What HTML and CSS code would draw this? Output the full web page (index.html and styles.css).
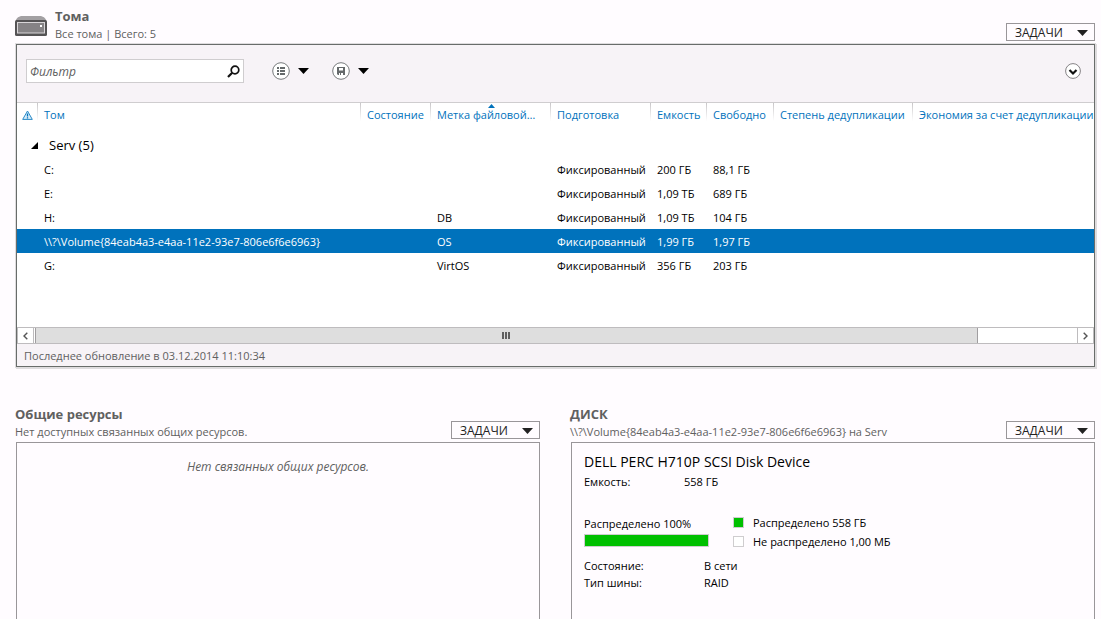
FILE: index.html
```html
<!DOCTYPE html>
<html lang="ru">
<head>
<meta charset="utf-8">
<title>Тома</title>
<link rel="stylesheet" href="styles.css">
</head>
<body>
<main class="page">
  <section class="volumes">
    <header class="head">
      <svg class="drive" width="32" height="20" viewBox="0 0 32 20" aria-hidden="true">
        <path d="M1 5V3.500L3 1.200L6 0H26L29 1.200L31 3.500V5Z" fill="#a3a0a3"/>
        <rect x="0" y="4" width="32" height="16" rx="1.500" fill="#555355"/>
        <rect x="2.500" y="6.500" width="27" height="10.500" fill="#858285" stroke="#d8d5d8"/>
        <rect x="25" y="9" width="2" height="2" fill="#fff"/>
      </svg>
      <div class="titles">
        <h2 class="title">Тома</h2>
        <p class="subtitle">Все тома | Всего: 5</p>
      </div>
      <button class="tasks" type="button">ЗАДАЧИ <svg width="11" height="6" viewBox="0 0 11 6" aria-hidden="true"><path d="M0 0H11L5.500 6Z" fill="#222"/></svg></button>
    </header>
    <div class="frame">
      <div class="toolbar">
        <div class="search">
          <input class="filter" type="text" placeholder="Фильтр" aria-label="Фильтр">
          <button class="plain" type="button" aria-label="Поиск">
            <svg width="13" height="13" viewBox="0 0 13 13" aria-hidden="true"><circle cx="8" cy="5" r="3.800" fill="none" stroke="#111" stroke-width="1.700"/><path d="M5.200 7.800L1 12" stroke="#111" stroke-width="2.200"/></svg>
          </button>
        </div>
        <button class="plain menu" type="button" aria-label="Вид">
          <svg width="18" height="18" viewBox="0 0 18 18" aria-hidden="true"><circle cx="9" cy="9" r="8.300" fill="#fff" stroke="#777a7c"/><path d="M5 5h2v2H5zM8 5h5v2H8zM5 8h2v2H5zM8 8h5v2H8zM5 11h2v2H5zM8 11h5v2H8z" fill="#65696b"/></svg>
          <svg width="11" height="6" viewBox="0 0 11 6" aria-hidden="true"><path d="M0 0H11L5.500 6Z"/></svg>
        </button>
        <button class="plain menu" type="button" aria-label="Сохранить">
          <svg width="18" height="18" viewBox="0 0 18 18" aria-hidden="true"><circle cx="9" cy="9" r="8.300" fill="#fff" stroke="#777a7c"/><path d="M5 5h8v8H6L5 12Z" fill="#65696b"/><path d="M7 6h4v2.500H7zM7 11h1v2H7zM9 11h2v2H9z" fill="#fff"/></svg>
          <svg width="11" height="6" viewBox="0 0 11 6" aria-hidden="true"><path d="M0 0H11L5.500 6Z"/></svg>
        </button>
        <button class="plain expand" type="button" aria-label="Развернуть">
          <svg width="16" height="16" viewBox="0 0 16 16" aria-hidden="true"><circle cx="8" cy="8" r="7.400" fill="#fff" stroke="#858285"/><path d="M4.500 7L8 10.500L11.500 7" fill="none" stroke="#111" stroke-width="2.200"/></svg>
        </button>
      </div>
      <div class="grid">
        <table class="table">
          <colgroup><col class="c-alert"><col class="c-volume"><col class="c-state"><col class="c-label"><col class="c-prov"><col class="c-size"><col class="c-free"><col class="c-rate"><col></colgroup>
          <thead>
            <tr>
              <th class="alert"><svg width="11" height="10" viewBox="0 0 11 10" role="img" aria-label="Предупреждение"><path d="M5.500 1L10.300 9.400H.7Z" fill="#d8ecf8" stroke="#2a8ac8"/><path d="M5.500 3.500V6.500M5.500 7.300V8.500" stroke="#0072bc" stroke-width="1.300"/></svg></th>
              <th>Том</th>
              <th>Состояние</th>
              <th class="sorted">Метка файловой…<svg class="sort" width="7" height="4" viewBox="0 0 7 4" aria-hidden="true"><path d="M0 4H7L3.500 0Z" fill="#0072bc"/></svg></th>
              <th>Подготовка</th>
              <th>Емкость</th>
              <th>Свободно</th>
              <th>Степень дедупликации</th>
              <th>Экономия за счет дедупликации</th>
            </tr>
          </thead>
          <tbody>
            <tr class="group"><td colspan="9"><svg class="node" width="7" height="7" viewBox="0 0 7 7" aria-hidden="true"><path d="M7 0V7H0Z"/></svg>Serv (5)</td></tr>
            <tr><td></td><td>C:</td><td></td><td></td><td>Фиксированный</td><td>200 ГБ</td><td>88,1 ГБ</td><td></td><td></td></tr>
            <tr><td></td><td>E:</td><td></td><td></td><td>Фиксированный</td><td>1,09 ТБ</td><td>689 ГБ</td><td></td><td></td></tr>
            <tr><td></td><td>H:</td><td></td><td>DB</td><td>Фиксированный</td><td>1,09 ТБ</td><td>104 ГБ</td><td></td><td></td></tr>
            <tr class="selected"><td></td><td>\\?\Volume{84eab4a3-e4aa-11e2-93e7-806e6f6e6963}</td><td></td><td>OS</td><td>Фиксированный</td><td>1,99 ГБ</td><td>1,97 ГБ</td><td></td><td></td></tr>
            <tr><td></td><td>G:</td><td></td><td>VirtOS</td><td>Фиксированный</td><td>356 ГБ</td><td>203 ГБ</td><td></td><td></td></tr>
          </tbody>
        </table>
      </div>
      <div class="scroll">
        <button class="arrow" type="button" aria-label="Прокрутить влево"><svg width="5" height="8" viewBox="0 0 5 8" aria-hidden="true"><path d="M4.300 .7L1 4L4.300 7.300" fill="none" stroke="#555" stroke-width="1.400"/></svg></button>
        <div class="track"><div class="thumb"><svg width="9" height="7" viewBox="0 0 9 7" aria-hidden="true"><path d="M0 0h2v7H0zM3 0h2v7H3zM6 0h2v7H6z" fill="#606060"/></svg></div></div>
        <button class="arrow" type="button" aria-label="Прокрутить вправо"><svg width="5" height="8" viewBox="0 0 5 8" aria-hidden="true"><path d="M.7 .7L4 4L.7 7.300" fill="none" stroke="#555" stroke-width="1.400"/></svg></button>
      </div>
      <div class="status">Последнее обновление в 03.12.2014 11:10:34</div>
    </div>
  </section>
  <div class="lower">
    <section class="pane">
      <header class="head">
        <div class="titles">
          <h2 class="title">Общие ресурсы</h2>
          <p class="subtitle">Нет доступных связанных общих ресурсов.</p>
        </div>
        <button class="tasks" type="button">ЗАДАЧИ <svg width="11" height="6" viewBox="0 0 11 6" aria-hidden="true"><path d="M0 0H11L5.500 6Z" fill="#222"/></svg></button>
      </header>
      <div class="box">
        <p class="empty">Нет связанных общих ресурсов.</p>
      </div>
    </section>
    <section class="pane">
      <header class="head">
        <div class="titles">
          <h2 class="title">ДИСК</h2>
          <p class="subtitle">\\?\Volume{84eab4a3-e4aa-11e2-93e7-806e6f6e6963} на Serv</p>
        </div>
        <button class="tasks" type="button">ЗАДАЧИ <svg width="11" height="6" viewBox="0 0 11 6" aria-hidden="true"><path d="M0 0H11L5.500 6Z" fill="#222"/></svg></button>
      </header>
      <div class="box disk">
        <h3 class="device">DELL PERC H710P SCSI Disk Device</h3>
        <dl class="facts capacity"><dt>Емкость:</dt><dd>558 ГБ</dd></dl>
        <div class="usage">
          <div>
            <p class="usage-label">Распределено 100%</p>
            <div class="bar"><div class="fill" style="width:100%"></div></div>
          </div>
          <ul class="legend">
            <li><span class="swatch used"></span>Распределено 558 ГБ</li>
            <li><span class="swatch"></span>Не распределено 1,00 МБ</li>
          </ul>
        </div>
        <dl class="facts"><dt>Состояние:</dt><dd>В сети</dd><dt>Тип шины:</dt><dd>RAID</dd></dl>
      </div>
    </section>
  </div>
</main>
</body>
</html>
```
FILE: styles.css
```css
* { box-sizing: border-box; }
body {
  margin: 0;
  background: #fffcff;
  color: #000;
  font: 11px/18px "Open Sans", "Noto Sans", sans-serif;
}
h2, h3, p, dl, dd, ul { margin: 0; padding: 0; }
button, input { font: inherit; color: inherit; }
svg { display: block; flex: none; }
.page {
  display: flex;
  flex-direction: column;
  min-height: 100vh;
  padding: 7px 6px 0 15px;
}
.head { display: flex; align-items: flex-start; }
.drive { margin: 9px 8px 0 0; }
.titles { flex: 1; min-width: 0; height: 37px; color: #606060; }
.title { font-size: 13px; line-height: 18px; font-weight: 700; }
.subtitle { line-height: 18px; white-space: nowrap; }
.tasks {
  display: flex;
  align-items: center;
  justify-content: space-between;
  width: 89px;
  height: 18px;
  margin-top: 16px;
  padding: 1px 6px 0 8px;
  border: 1px solid #999699;
  background: #fffcff;
  color: #222;
  font-size: 12px;
  line-height: 16px;
}
.frame {
  margin-left: 1px;
  border: 1px solid #686c6a;
  box-shadow: 0 0 0 1px #dedcde, 1px 1px 0 1px #dedcde;
  background: #fff;
}
.toolbar {
  display: flex;
  align-items: flex-start;
  height: 58px;
  padding: 14px 13px 0 9px;
  border-bottom: 1px solid #cfcdcf;
  background: #f7f3f7;
}
.search {
  display: flex;
  align-items: center;
  width: 218px;
  height: 24px;
  margin-right: 28px;
  padding-right: 3px;
  border: 1px solid #cfcdcf;
  background: #fff;
}
.filter {
  flex: 1;
  min-width: 0;
  padding: 1px 3px 0;
  border: 0;
  outline: 0;
  background: none;
  font-size: 12px;
}
.filter::placeholder { color: #606060; font-style: italic; opacity: 1; }
.plain { padding: 0; border: 0; background: none; }
.menu { display: flex; align-items: center; gap: 8px; height: 24px; margin-right: 23px; }
.expand { margin: 4px 0 0 auto; }
.grid { height: 224px; overflow: hidden; }
.table { width: 100%; border-collapse: collapse; table-layout: fixed; }
.c-alert { width: 20px; }
.c-volume { width: 323px; }
.c-state { width: 70px; }
.c-label { width: 120px; }
.c-prov { width: 100px; }
.c-size { width: 56px; }
.c-free { width: 67px; }
.c-rate { width: 139px; }
th {
  height: 30px;
  padding: 3px 0 0 7px;
  background: linear-gradient(#c8c6c8, #fff) no-repeat 0 0 / 1px 18px;
  color: #0072bc;
  font-weight: 400;
  text-align: left;
  vertical-align: top;
  white-space: nowrap;
}
.alert { padding: 7px 0 0 5px; background: none; }
.sorted { position: relative; }
.sort { position: absolute; top: 1px; left: 48%; }
td { height: 24px; padding: 1px 0 0 7px; white-space: nowrap; }
.group td { padding: 0 0 0 14px; font-size: 13px; }
.node { display: inline-block; margin-right: 11px; vertical-align: 1px; }
.selected { background: #0072bc; color: #fff; }
.scroll { display: flex; height: 17px; border: 1px solid #bebcbe; }
.arrow {
  display: flex;
  align-items: center;
  justify-content: center;
  width: 16px;
  padding: 0;
  border: 0;
  border-right: 1px solid #bebcbe;
  background: #fff;
}
.arrow:last-child { border-right: 0; border-left: 1px solid #bebcbe; }
.track { flex: 1; padding-left: 1px; }
.thumb {
  display: flex;
  align-items: center;
  justify-content: center;
  width: 90.5%;
  height: 100%;
  border: 1px solid #a09ea0;
  border-width: 0 1px;
  background: #dedede;
}
.status { height: 22px; padding: 1px 0 0 7px; background: #f7f3f7; color: #606060; line-height: 22px; }
.lower {
  display: grid;
  grid-template-columns: 1fr 1fr;
  gap: 30px;
  flex: 1;
  margin-top: 38px;
}
.pane { display: flex; flex-direction: column; min-width: 0; }
.box { flex: 1; margin-left: 1px; border: 1px solid #999699; border-bottom: 0; }
.empty { padding-top: 15px; color: #606060; font-size: 12px; font-style: italic; text-align: center; }
.disk { padding: 8px 12px; }
.device { font-size: 14px; line-height: 22px; font-weight: 400; }
.facts { display: grid; grid-template-columns: 120px 1fr; line-height: 17px; }
.capacity { grid-template-columns: 100px 1fr; }
.usage { display: flex; gap: 24px; margin: 23px 0 6px; }
.usage-label { margin-top: 2px; line-height: 18px; }
.bar { width: 125px; height: 13px; margin-top: 1px; border: 1px solid #cfcdcf; background: #fff; }
.fill { height: 100%; background: #00c000; }
.legend { list-style: none; line-height: 19px; }
.legend li { display: flex; align-items: center; gap: 9px; }
.swatch { width: 11px; height: 11px; border: 1px solid #cfcdcf; background: #fff; }
.used { background: #00c000; }
```
